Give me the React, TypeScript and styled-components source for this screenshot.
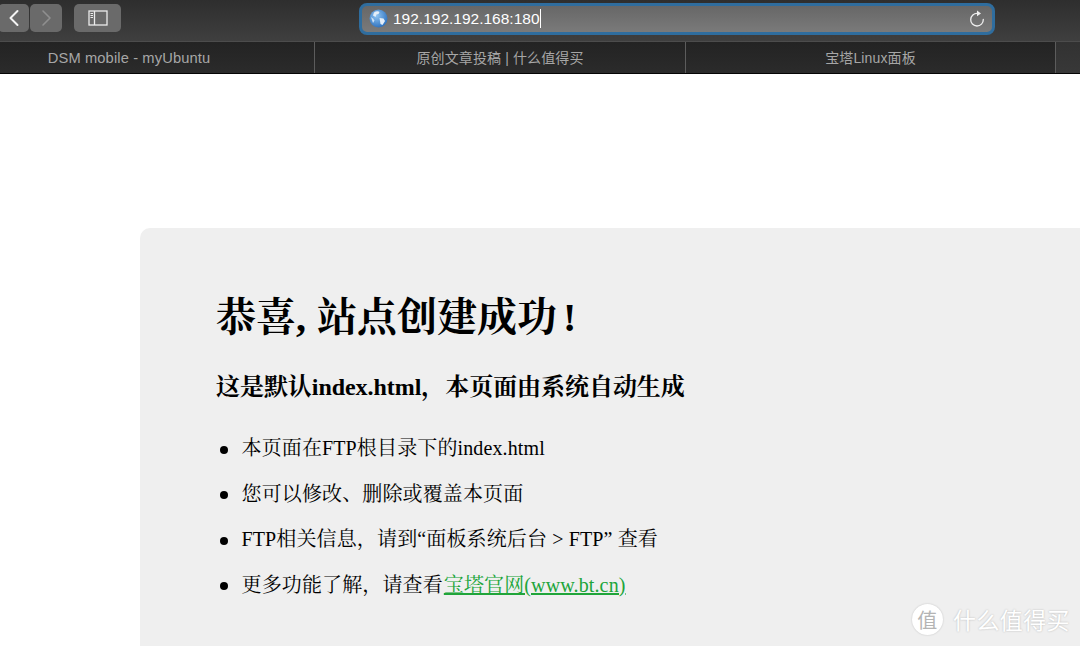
import React from "react";
import styled, { createGlobalStyle } from "styled-components";

const Global = createGlobalStyle`
  html, body { margin: 0; padding: 0; width: 1080px; height: 646px; overflow: hidden; background: #fff; }
  * { box-sizing: border-box; }
`;

const Page = styled.div`
  width: 1080px;
  height: 646px;
  overflow: hidden;
  position: relative;
  display: flex;
  flex-direction: column;
`;

const Toolbar = styled.div`
  height: 42px;
  flex: none;
  display: flex;
  align-items: center;
  background: linear-gradient(#2e2e2e 0%, #3f3f3f 100%);
  border-bottom: 1px solid #4c4c4c;
  padding-bottom: 5px;
`;

const NavGroup = styled.div`
  display: flex;
  gap: 1px;
  margin-left: -2px;
`;

const NavButton = styled.div<{ $on?: boolean }>`
  width: ${(p) => (p.$on ? 31 : 32)}px;
  height: 28px;
  border-radius: 5px;
  background: #6a6a6a;
  display: flex;
  align-items: center;
  justify-content: center;
  color: ${(p) => (p.$on ? "#f4f4f4" : "#8f8f8f")};
`;

const SideButton = styled.div`
  width: 47px;
  height: 28px;
  margin-left: 12px;
  border-radius: 5px;
  background: #6a6a6a;
  display: flex;
  align-items: center;
  justify-content: center;
`;

const Address = styled.div`
  width: 636px;
  height: 32px;
  margin-left: 238px;
  margin-top: 1px;
  border: 3px solid #2f6d9e;
  border-radius: 8px;
  background: linear-gradient(#676767, #7a7a7a);
  display: flex;
  align-items: center;
  padding: 0 6px 0 7px;
  color: #fff;
  font: 15.5px "Liberation Sans", Arial, sans-serif;
`;

const AddressText = styled.span`
  margin-left: 5px;
  border-right: 1px solid #fff;
  line-height: 19px;
  flex: none;
`;

const Reload = styled.div`
  margin-left: auto;
  display: flex;
`;

const Tabs = styled.div`
  height: 32px;
  flex: none;
  display: flex;
  background: linear-gradient(#232323, #2b2b2b);
  border-bottom: 1px solid #050505;
  color: #a6a6a6;
  font: 14px "Liberation Sans", "Noto Sans CJK SC", sans-serif;
  letter-spacing: 0.12px;
`;

const Tab = styled.div<{ $w: number; $shift?: number; $size?: number; $drop?: number }>`
  width: ${(p) => p.$w}px;
  flex: none;
  display: flex;
  align-items: center;
  justify-content: center;
  border-right: 1px solid #5c5c5c;
  padding: ${(p) => p.$drop ?? 0}px ${(p) => p.$shift ?? 0}px ${(p) => (p.$drop ? 0 : 2)}px 0;
  font-size: ${(p) => p.$size ?? 14}px;
`;

const TabRest = styled.div`
  flex: 1;
  background: linear-gradient(#323232, #383838);
`;

const Content = styled.div`
  flex: 1;
  padding: 154px 0 0 140px;
  background: #fff;
`;

const Panel = styled.div`
  width: 1000px;
  height: 560px;
  background: #efefef;
  border-radius: 10px 0 0 0;
  padding: 66px 0 0 76px;
  color: #000;
  font-family: "Liberation Serif", "Noto Serif CJK SC", "Noto Sans CJK SC", serif;
`;

const Title = styled.h1`
  margin: 0;
  font-size: 40px;
  line-height: 48px;
  font-weight: 700;
  word-spacing: 1px;
`;

const Bang = styled.span`
  margin-left: 6px;
`;

const Subtitle = styled.h2`
  margin: 28px 0 0;
  font-size: 24px;
  line-height: 34px;
  font-weight: 700;
  letter-spacing: -0.05px;
`;

const List = styled.ul`
  list-style: none;
  margin: 30.4px 0 0;
  padding: 0 0 0 25.5px;
  font-size: 20px;
  letter-spacing: 0.13px;
`;

const Item = styled.li`
  height: 45.4px;
  line-height: 28px;

  &::before {
    content: "";
    display: inline-block;
    width: 8px;
    height: 8px;
    border-radius: 50%;
    background: #000;
    margin: 0 13.5px 2px -21.5px;
    vertical-align: middle;
  }
`;

const GreenLink = styled.a`
  color: #20a53a;
  text-decoration: underline;
  margin-left: 1px;
`;

const Watermark = styled.div`
  position: absolute;
  right: 10px;
  bottom: 10px;
  display: flex;
  align-items: center;
  gap: 10px;
  color: #fff;
  font: 23px "Noto Sans CJK SC", sans-serif;
  letter-spacing: 0.4px;
  text-shadow: 0 0 2px rgba(0, 0, 0, 0.25);
`;

const Badge = styled.div`
  width: 31px;
  height: 31px;
  border-radius: 50%;
  background: #fff;
  color: #b4b4b4;
  font-size: 20px;
  line-height: 31px;
  text-align: center;
  text-shadow: none;
  box-shadow: 0 0 2px rgba(0, 0, 0, 0.2);
`;

const Chevron = ({ d, w }: { d: string; w: number }) => (
  <svg width="14" height="18" viewBox="0 0 14 18" fill="none" stroke="currentColor" strokeWidth={w} strokeLinecap="round" strokeLinejoin="round">
    <path d={d} />
  </svg>
);

export default function App() {
  return (
    <Page>
      <Global />
      <Toolbar>
        <NavGroup>
          <NavButton $on><Chevron d="M10.5 2 L3.5 9 L10.5 16" w={2} /></NavButton>
          <NavButton><Chevron d="M4 2 L11 9 L4 16" w={1.6} /></NavButton>
        </NavGroup>
        <SideButton>
          <svg width="20" height="16" viewBox="0 0 20 16" fill="none">
            <rect x="1" y="1" width="18" height="14" stroke="#ececec" strokeWidth="1.3" />
            <line x1="6.5" y1="1" x2="6.5" y2="15" stroke="#ececec" strokeWidth="1.3" />
            <path d="M2.5 3.5h2.5M2.5 5.5h2.5M2.5 7.5h2.5" stroke="#ececec" strokeWidth="1" />
          </svg>
        </SideButton>
        <Address>
          <svg width="19" height="19" viewBox="0 0 19 19">
            <defs>
              <radialGradient id="globe" cx="0.4" cy="0.35" r="0.75">
                <stop offset="0" stopColor="#8fc4f2" />
                <stop offset="1" stopColor="#2368b8" />
              </radialGradient>
            </defs>
            <circle cx="9.5" cy="9.5" r="9" fill="url(#globe)" />
            <path d="M5 3.5c2-1.5 4.5-1.5 5.5-.5l-1 2-2 .5-1 2.5-2.5-1.5z" fill="#e4eef8" />
            <path d="M10.5 9l4 .5 1.5 2.5-2.5 4-2-1-.5-3z" fill="#e4eef8" />
            <path d="M2 8l2 1.5 1.5 2L4 14z" fill="#cfe2f5" />
          </svg>
          <AddressText>192.192.192.168:180</AddressText>
          <Reload>
            <svg width="18" height="18" viewBox="0 0 18 18" fill="none">
              <path d="M9.5 3.4A6.3 6.3 0 1 0 15.3 9.5" stroke="#efefef" strokeWidth="1.3" strokeLinecap="round" />
              <path d="M9 0.6 L13 3.4 L9 6.2 Z" fill="#efefef" />
            </svg>
          </Reload>
        </Address>
      </Toolbar>
      <Tabs>
        <Tab $w={315} $shift={56} $size={14.7} $drop={1}>DSM mobile - myUbuntu</Tab>
        <Tab $w={371}>原创文章投稿 | 什么值得买</Tab>
        <Tab $w={370}>宝塔Linux面板</Tab>
        <TabRest />
      </Tabs>
      <Content>
        <Panel>
          <Title>恭喜, 站点创建成功<Bang>!</Bang></Title>
          <Subtitle>这是默认index.html，本页面由系统自动生成</Subtitle>
          <List>
            <Item>本页面在FTP根目录下的index.html</Item>
            <Item>您可以修改、删除或覆盖本页面</Item>
            <Item>FTP相关信息，请到“面板系统后台 &gt; FTP” 查看</Item>
            <Item>更多功能了解，请查看<GreenLink href="#">宝塔官网(www.bt.cn)</GreenLink></Item>
          </List>
        </Panel>
      </Content>
      <Watermark>
        <Badge>值</Badge>
        <span>什么值得买</span>
      </Watermark>
    </Page>
  );
}
